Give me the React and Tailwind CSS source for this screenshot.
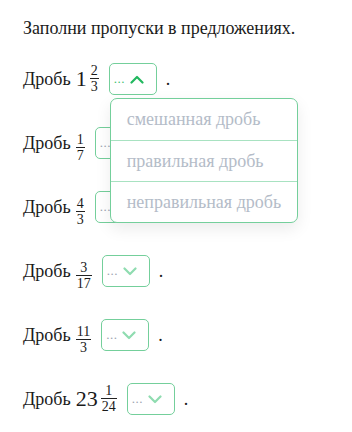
import React from 'react';

const rows = [
  { whole: '1', num: '2', den: '3', open: true },
  { num: '1', den: '7' },
  { num: '4', den: '3' },
  { num: '3', den: '17' },
  { num: '11', den: '3' },
  { whole: '23', num: '1', den: '24' },
];

const options = ['смешанная дробь', 'правильная дробь', 'неправильная дробь'];

function Chevron({ up }) {
  return (
    <svg width="14" height="9" viewBox="0 0 14 9" className="shrink-0">
      <polyline
        points={up ? '1.5,7.5 7,2 12.5,7.5' : '1.5,1.5 7,7 12.5,1.5'}
        fill="none"
        stroke={up ? '#22b85f' : '#8fdcb0'}
        strokeWidth="2.2"
        strokeLinecap="round"
        strokeLinejoin="round"
      />
    </svg>
  );
}

function Fraction({ whole, num, den }) {
  return (
    <span className="inline-flex items-center">
      {whole && <span className="text-[22px] leading-none mr-[3px]">{whole}</span>}
      <span className="inline-flex flex-col items-center text-[14px] leading-[13px]">
        <span className="px-[1px] pb-[1px]">{num}</span>
        <span className="self-stretch h-px bg-[#222]" />
        <span className="px-[1px] pt-[1px]">{den}</span>
      </span>
    </span>
  );
}

function Select({ open }) {
  return (
    <div className="relative">
      <div className="w-[48px] h-[32px] rounded-[5px] border border-[#74cf9b] flex items-center pl-[4px] gap-[5px] bg-white">
        <span className={open ? 'text-[#3fbf6f] text-[13px] tracking-[0.5px]' : 'text-[#9ca3af] text-[13px] tracking-[0.5px]'}>...</span>
        <Chevron up={open} />
      </div>
      {open && (
        <div className="absolute left-[1px] top-[35px] z-10 w-[188px] rounded-[7px] border border-[#74cf9b] bg-white shadow-[0_6px_16px_rgba(0,0,0,0.08)]">
          {options.map((o, i) => (
            <div
              key={o}
              className={'h-[41px] flex items-center pl-[16px] text-[18px] text-[#b4bcc8]' + (i > 0 ? ' border-t border-[#a8e2c1]' : '')}
            >
              {o}
            </div>
          ))}
        </div>
      )}
    </div>
  );
}

export default function App() {
  return (
    <div className="w-[352px] h-[432px] bg-white px-[23px] pt-[17px] text-[#1a1a1a]" style={{ fontFamily: '"Liberation Serif", "Times New Roman", serif' }}>
      <p className="text-[18px] leading-[22px]">Заполни пропуски в предложениях.</p>
      <div className="mt-[24px] flex flex-col gap-[32px]">
        {rows.map((r, i) => (
          <div key={i} className="flex items-center h-[32px] text-[18px]">
            <span>Дробь</span>
            <span className="ml-[5px] mr-[10px]"><Fraction {...r} /></span>
            <Select open={r.open} />
            <span className="ml-[9px]">.</span>
          </div>
        ))}
      </div>
    </div>
  );
}
